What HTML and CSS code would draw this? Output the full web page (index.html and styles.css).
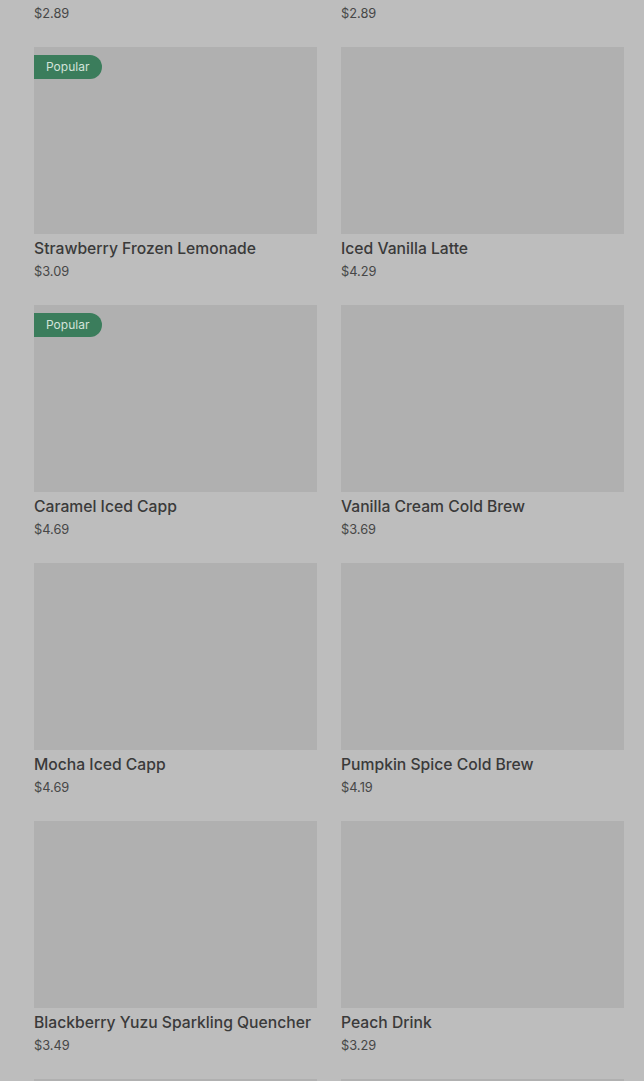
FILE: index.html
```html
<!DOCTYPE html>
<html>
<head>
    <title>Menu</title>
    <link rel="stylesheet" href="styles.css">
</head>
<body>
    <div class="menu">
        <div class="grid">
            <div class="item">
                <div class="photo"></div>
                <p class="name">Strawberry Açaí Refresher</p>
                <p class="price">$2.89</p>
            </div>
            <div class="item">
                <div class="photo"></div>
                <p class="name">Mango Refresher</p>
                <p class="price">$2.89</p>
            </div>
            <div class="item">
                <div class="photo"><span class="badge">Popular</span></div>
                <p class="name">Strawberry Frozen Lemonade</p>
                <p class="price">$3.09</p>
            </div>
            <div class="item">
                <div class="photo"></div>
                <p class="name">Iced Vanilla Latte</p>
                <p class="price">$4.29</p>
            </div>
            <div class="item">
                <div class="photo"><span class="badge">Popular</span></div>
                <p class="name">Caramel Iced Capp</p>
                <p class="price">$4.69</p>
            </div>
            <div class="item">
                <div class="photo"></div>
                <p class="name">Vanilla Cream Cold Brew</p>
                <p class="price">$3.69</p>
            </div>
            <div class="item">
                <div class="photo"></div>
                <p class="name">Mocha Iced Capp</p>
                <p class="price">$4.69</p>
            </div>
            <div class="item">
                <div class="photo"></div>
                <p class="name">Pumpkin Spice Cold Brew</p>
                <p class="price">$4.19</p>
            </div>
            <div class="item">
                <div class="photo"></div>
                <p class="name">Blackberry Yuzu Sparkling Quencher</p>
                <p class="price">$3.49</p>
            </div>
            <div class="item">
                <div class="photo"></div>
                <p class="name">Peach Drink</p>
                <p class="price">$3.29</p>
            </div>
            <div class="item">
                <div class="photo"></div>
                <p class="name">Iced Green Tea</p>
                <p class="price">$2.79</p>
            </div>
            <div class="item">
                <div class="photo"></div>
                <p class="name">Iced Coffee</p>
                <p class="price">$2.49</p>
            </div>
        </div>
    </div>
</body>
</html>
```

FILE: styles.css
```css
body {
    margin: 0;
    background-color: #bdbdbd;
    font-family: Inter, Roboto, "Liberation Sans", sans-serif;
    height: 1081px;
    overflow: hidden;
}
.menu {
    padding: 0 20px 0 34px;
    margin-top: -211px;
}
.grid {
    display: grid;
    grid-template-columns: 283px 283px;
    column-gap: 24px;
    row-gap: 24px;
}
.item {
    display: flex;
    flex-direction: column;
}
.photo {
    position: relative;
    height: 187px;
    background-color: #b0b0b0;
}
.badge {
    position: absolute;
    top: 8px;
    left: 0;
    height: 24px;
    line-height: 24px;
    padding: 0 13px 0 12px;
    font-size: 12px;
    color: #d3e3da;
    background-color: #3b7d5c;
    border-radius: 0 12px 12px 0;
}
.name {
    margin: 5px 0 0;
    font-size: 15.7px;
    line-height: 20px;
    font-weight: 500;
    color: #3a3a3a;
    white-space: nowrap;
}
.price {
    margin: 4px 0 0;
    font-size: 12.8px;
    line-height: 18px;
    color: #474747;
}
```
